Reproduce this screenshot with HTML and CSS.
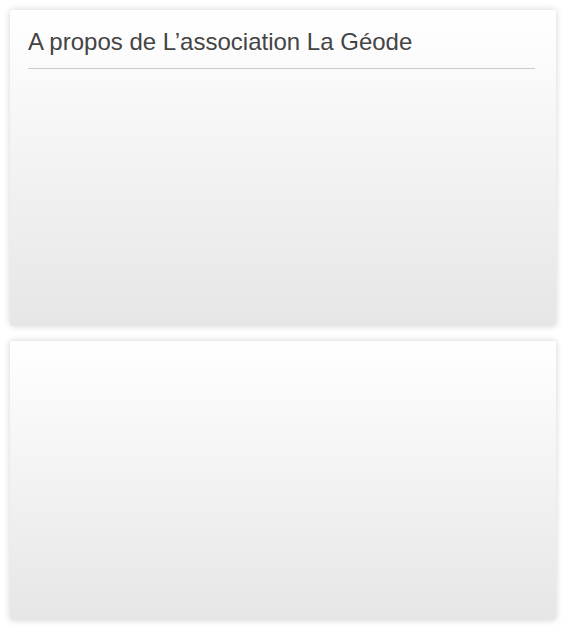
FILE: index.html
```html
<!DOCTYPE html>
<html lang="fr">
<head>
  <meta charset="UTF-8" />
  <meta name="viewport" content="width=device-width, initial-scale=1" />
  <title>La Géode</title>
  <link rel="stylesheet" href="styles.css">
</head>
<body>
  <div class="panel panel-about">
    <h2 class="panel-title">A propos de L’association La Géode</h2>
  </div>
  <div class="panel panel-second"></div>
</body>
</html>
```

FILE: styles.css
```css
body { margin: 0; padding: 10px 10px 8px; background: #fff; font-family: "Liberation Sans", Arial, sans-serif; }
.panel { background: linear-gradient(#fff, #e6e6e6); border-radius: 3px; box-shadow: 0 0 7px rgba(0,0,0,0.18); padding: 18px 21px 18px 18px; box-sizing: border-box; }
.panel + .panel { margin-top: 15px; }
.panel-about { height: 316px; }
.panel-second { height: 279px; }
.panel-title { margin: 0; font-size: 24px; font-weight: normal; color: #444; line-height: 28px; padding-bottom: 12px; border-bottom: 1px solid #ccc; }
```
